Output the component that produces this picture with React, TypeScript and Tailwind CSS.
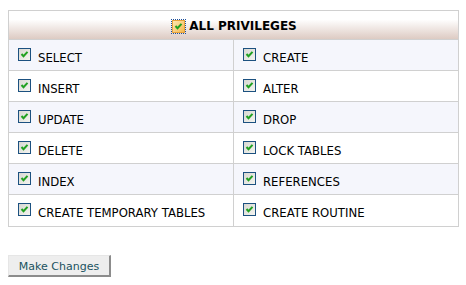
import React from "react";

function Check({ header = false }: { header?: boolean }) {
  return (
    <span
      className={
        header
          ? "relative inline-block w-[13px] h-[13px] shrink-0 outline-1 outline-dotted outline-[#1d4f9a] bg-gradient-to-br from-[#fde7b0] to-[#f5b84a] border border-[#e8a33a]"
          : "relative inline-block w-[13px] h-[13px] shrink-0 border border-[#1c5180] bg-gradient-to-br from-[#d8d8d2] to-[#f4f4f0]"
      }
    >
      <svg viewBox="0 0 11 11" className="absolute left-0 top-0 w-[11px] h-[11px]">
        <path d="M2.5 5 L4.5 7.2 L8.5 2.8" stroke="#21a121" strokeWidth="2" fill="none" />
      </svg>
    </span>
  );
}

const rows: [string, string][] = [
  ["SELECT", "CREATE"],
  ["INSERT", "ALTER"],
  ["UPDATE", "DROP"],
  ["DELETE", "LOCK TABLES"],
  ["INDEX", "REFERENCES"],
  ["CREATE TEMPORARY TABLES", "CREATE ROUTINE"],
];

export default function App() {
  return (
    <div className="w-[466px] h-[285px] bg-white pt-[10px] pl-2 text-[11.7px] text-black" style={{ fontFamily: '"DejaVu Sans", Verdana, sans-serif' }}>
      <div className="w-[451px] border border-[#d0d0d0]">
        <div className="h-[29px] border-b border-[#d0d0d0] bg-gradient-to-b from-white from-30% to-[#ddcbc3] flex items-center justify-center gap-[4px] pt-[2px] pl-[2px]">
          <Check header />
          <span className="font-bold text-[12px]">ALL PRIVILEGES</span>
        </div>
        {rows.map(([a, b], i) => (
          <div
            key={a}
            className={
              "grid grid-cols-[225px_224px] h-[31px] " +
              (i < rows.length - 1 ? "border-b border-[#d0d0d0] " : "h-[30px] ") +
              (i % 2 === 0 ? "bg-[#f5f6fc]" : "bg-white")
            }
          >
            <div className="border-r border-[#d0d0d0] flex items-start pl-[9px] pt-[8px] gap-[7px]">
              <Check />
              <span className="mt-[4px] leading-[12px]">{a}</span>
            </div>
            <div className="flex items-start pl-[9px] pt-[8px] gap-[7px]">
              <Check />
              <span className="mt-[4px] leading-[12px]">{b}</span>
            </div>
          </div>
        ))}
      </div>
      <button className="mt-[28px] w-[103px] h-[22px] bg-[#eeeeee] border-t border-l border-[#e6e6e6] border-b-2 border-r-2 border-b-[#8c8c8c] border-r-[#8c8c8c] text-[#1a5260] text-[11px] leading-none pt-[1px]">
        Make Changes
      </button>
    </div>
  );
}
